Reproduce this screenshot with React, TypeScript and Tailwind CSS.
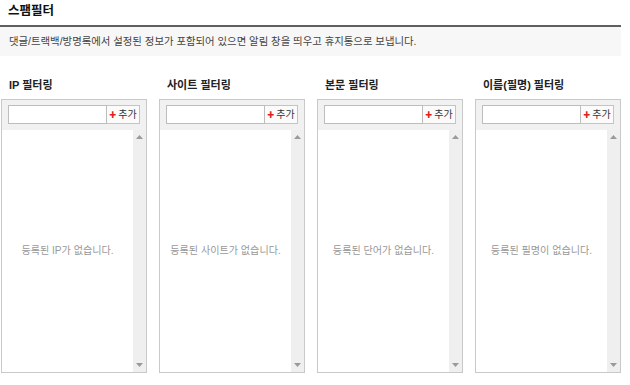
import { FC } from "react";

const FONT = "font-['Liberation_Sans','Noto_Sans_CJK_KR',sans-serif]";

type Filter = { title: string; empty: string };

const filters: Filter[] = [
    { title: "IP 필터링", empty: "등록된 IP가 없습니다." },
    { title: "사이트 필터링", empty: "등록된 사이트가 없습니다." },
    { title: "본문 필터링", empty: "등록된 단어가 없습니다." },
    { title: "이름(필명) 필터링", empty: "등록된 필명이 없습니다." },
];

const ScrollBar: FC = () => (
    <div className="w-[13px] bg-[#efefef] flex flex-col justify-between items-center py-[5px]">
        <svg width="7" height="4" viewBox="0 0 7 4">
            <path d="M3.5 0 L7 4 L0 4 Z" fill="#9a9a9a" />
        </svg>
        <svg width="7" height="4" viewBox="0 0 7 4">
            <path d="M0 0 L7 0 L3.5 4 Z" fill="#9a9a9a" />
        </svg>
    </div>
);

const FilterPanel: FC<{ filter: Filter }> = ({ filter }) => (
    <div className="flex flex-col">
        <h3 className="h-[14px] leading-[14px] pl-[8px] text-[11px] font-bold text-[#222]">
            {filter.title}
        </h3>
        <div className="mt-[7px] w-[146px] h-[274px] border border-[#c9c9c9] flex flex-col">
            {/* input row */}
            <div className="bg-[#f1f1f1] px-[6px] pt-[5px] pb-[6px] flex">
                <input className="w-[99px] h-[19px] border border-[#bdbdbd] bg-white outline-none" />
                <button className="w-[33px] h-[19px] border border-[#c4c4c4] border-l-0 bg-[#fbfbfb] flex items-center justify-center gap-[2px] text-[10px] text-[#333]">
                    <span className="text-[#e0201a] text-[7px] leading-none">✚</span>
                    <span className="leading-none">추가</span>
                </button>
            </div>
            {/* list */}
            <div className="flex-1 flex bg-white">
                <div className="flex-1 flex items-center justify-center text-[10.1px] text-[#999]">
                    {filter.empty}
                </div>
                <ScrollBar />
            </div>
        </div>
    </div>
);

const App: FC = () => {
    return (
        <div className={`w-[630px] h-[385px] bg-white overflow-hidden text-[#333] ${FONT}`}>
            <h2 className="h-[25px] pl-[8px] pt-[3px] text-[12.5px] leading-[16px] font-bold text-[#111]">스팸필터</h2>
            <div className="w-[621px] border-t-2 border-[#5f5f5f] bg-[#f7f7f7] h-[31px] pl-[9px] flex items-center text-[10.4px] text-[#444]">
                댓글/트랙백/방명록에서 설정된 정보가 포함되어 있으면 알림 창을 띄우고 휴지통으로 보냅니다.
            </div>
            <div className="flex gap-[12px] pl-[1px] pt-[22px]">
                {filters.map((f) => (
                    <FilterPanel key={f.title} filter={f} />
                ))}
            </div>
        </div>
    );
};

export default App;
